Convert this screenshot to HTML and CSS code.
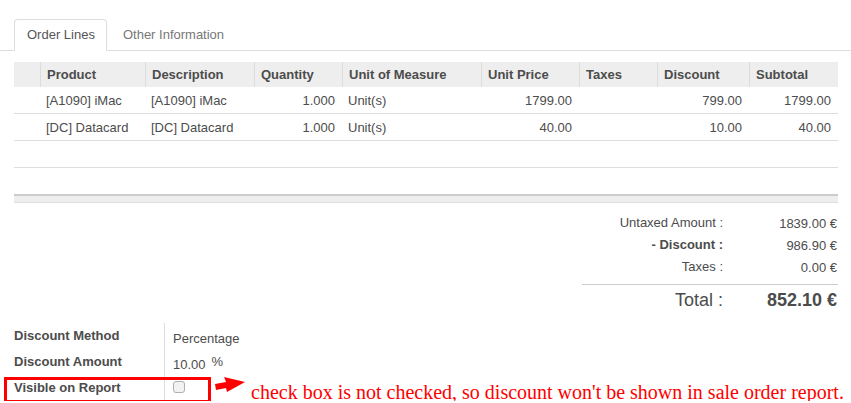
FILE: index.html
```html
<!DOCTYPE html>
<html>
<head>
<meta charset="utf-8">
<link rel="stylesheet" href="styles.css">
</head>
<body>
<ul class="tabs">
  <li class="tab active">Order Lines</li>
  <li class="tab">Other Information</li>
</ul>
<div class="page">
  <table class="lines">
    <colgroup>
      <col class="c-handle"><col class="c-product"><col class="c-desc"><col class="c-qty"><col class="c-uom"><col class="c-price"><col class="c-taxes"><col class="c-disc"><col class="c-sub">
    </colgroup>
    <thead>
      <tr>
        <th></th><th>Product</th><th>Description</th><th>Quantity</th><th>Unit of Measure</th><th>Unit Price</th><th>Taxes</th><th>Discount</th><th>Subtotal</th>
      </tr>
    </thead>
    <tbody>
      <tr>
        <td></td><td>[A1090] iMac</td><td>[A1090] iMac</td><td class="num">1.000</td><td>Unit(s)</td><td class="num">1799.00</td><td></td><td class="num">799.00</td><td class="num">1799.00</td>
      </tr>
      <tr>
        <td></td><td>[DC] Datacard</td><td>[DC] Datacard</td><td class="num">1.000</td><td>Unit(s)</td><td class="num">40.00</td><td></td><td class="num">10.00</td><td class="num">40.00</td>
      </tr>
      <tr class="empty"><td colspan="9"></td></tr>
      <tr class="empty last"><td colspan="9"></td></tr>
    </tbody>
    <tfoot>
      <tr><td colspan="9"></td></tr>
    </tfoot>
  </table>

  <div class="totals-wrap">
    <div class="totals">
      <div class="t-label">Untaxed Amount :</div><div class="t-value">1839.00 €</div>
      <div class="t-label bold">- Discount :</div><div class="t-value">986.90 €</div>
      <div class="t-label">Taxes :</div><div class="t-value">0.00 €</div>
      <div class="t-label grand">Total :</div><div class="t-value grand bold">852.10 €</div>
    </div>
  </div>

  <div class="form">
    <div class="f-label">Discount Method</div><div class="f-value">Percentage</div>
    <div class="f-label">Discount Amount</div><div class="f-value">10.00<span class="pct">%</span></div>
    <div class="f-label">Visible on Report</div><div class="f-value"><span class="checkbox"></span></div>
    <div class="red-box"></div>
    <svg class="arrow" width="34" height="20" viewBox="0 0 34 20"><polygon points="2,9 13,7 11,2 32,7 14,17 13,13 3,15" fill="#ff0000"/></svg>
    <div class="note">check box is not checked, so discount won't be shown in sale order report.</div>
  </div>
</div>
</body>
</html>
```
FILE: styles.css
```css
html, body {
  margin: 0;
  padding: 0;
  background: #fff;
  overflow: hidden;
}
body {
  font-family: "Liberation Sans", Arial, sans-serif;
  font-size: 13px;
  color: #4c4c4c;
}
.tabs {
  list-style: none;
  margin: 0;
  padding: 19px 0 0 14px;
  display: flex;
  border-bottom: 1px solid #ddd;
}
.tab {
  margin-bottom: -1px;
  padding: 6px 11px 6px 12px;
  line-height: 18px;
  border: 1px solid transparent;
  border-radius: 4px 4px 0 0;
  color: #777;
}
.tab + .tab {
  margin-left: 3px;
}
.tab.active {
  border-color: #ddd;
  border-bottom-color: #fff;
  background: #fff;
  color: #555;
}
.page {
  padding: 0 13px 0 14px;
}
.lines {
  margin-top: 11px;
  width: 824px;
  table-layout: fixed;
  border-collapse: separate;
  border-spacing: 0;
}
.c-handle { width: 26px; }
.c-product { width: 105px; }
.c-desc { width: 109px; }
.c-qty { width: 88px; }
.c-uom { width: 139px; }
.c-price { width: 98px; }
.c-taxes { width: 78px; }
.c-disc { width: 92px; }
.c-sub { width: 89px; }
.lines th {
  height: 25px;
  padding: 0 6px;
  background: #eee;
  text-align: left;
  font-weight: bold;
  color: #4c4c4c;
  box-sizing: border-box;
}
.lines th + th {
  border-left: 1px solid #dcdcdc;
}
.lines td {
  height: 27px;
  padding: 0 6px;
  border-bottom: 1px solid #ddd;
  box-sizing: border-box;
  white-space: nowrap;
}
.lines td.num {
  text-align: right;
  padding-right: 7px;
}
.lines tr.last td {
  border-bottom: none;
  height: 26px;
}
.lines tfoot td {
  height: 9px;
  padding: 0;
  background: #eee;
  border-top: 2px solid #ccc;
  border-bottom: 1px solid #ddd;
}
.totals-wrap {
  display: flex;
  justify-content: flex-end;
  margin-top: 9px;
}
.totals {
  width: 256px;
  display: grid;
  grid-template-columns: 145px 111px;
  line-height: 22px;
}
.t-label {
  text-align: right;
  padding-right: 4px;
}
.t-value {
  text-align: right;
  padding-right: 1px;
  padding-top: 2px;
  line-height: 20px;
}
.bold {
  font-weight: bold;
}
.t-label.grand,
.t-value.grand {
  margin-top: 6px;
  border-top: 1px solid #ccc;
  font-size: 18px;
  line-height: 31px;
  padding-top: 0;
}
.form {
  position: relative;
  margin-top: 7px;
  display: grid;
  grid-template-columns: 151px auto;
  grid-auto-rows: 26px;
}
.f-label {
  font-weight: bold;
  line-height: 26px;
  border-right: 1px solid #ddd;
}
.f-value {
  padding: 3px 0 0 8px;
  line-height: 26px;
}
.pct {
  margin-left: 6px;
  position: relative;
  top: -3px;
}
.checkbox {
  display: inline-block;
  width: 10px;
  height: 10px;
  border: 1px solid #b0b0b0;
  border-radius: 3px;
  background: #f2f2f2;
  vertical-align: middle;
  position: relative;
  top: -5px;
}
.red-box {
  position: absolute;
  left: -10px;
  top: 54px;
  width: 207px;
  height: 26px;
  box-sizing: border-box;
  border: 3px solid #ff0000;
}
.arrow {
  position: absolute;
  left: 199px;
  top: 52px;
}
.note {
  position: absolute;
  left: 237px;
  top: 59px;
  font-family: "Liberation Serif", "Times New Roman", serif;
  font-size: 20px;
  line-height: 20px;
  color: #ff0000;
  white-space: nowrap;
}
```
